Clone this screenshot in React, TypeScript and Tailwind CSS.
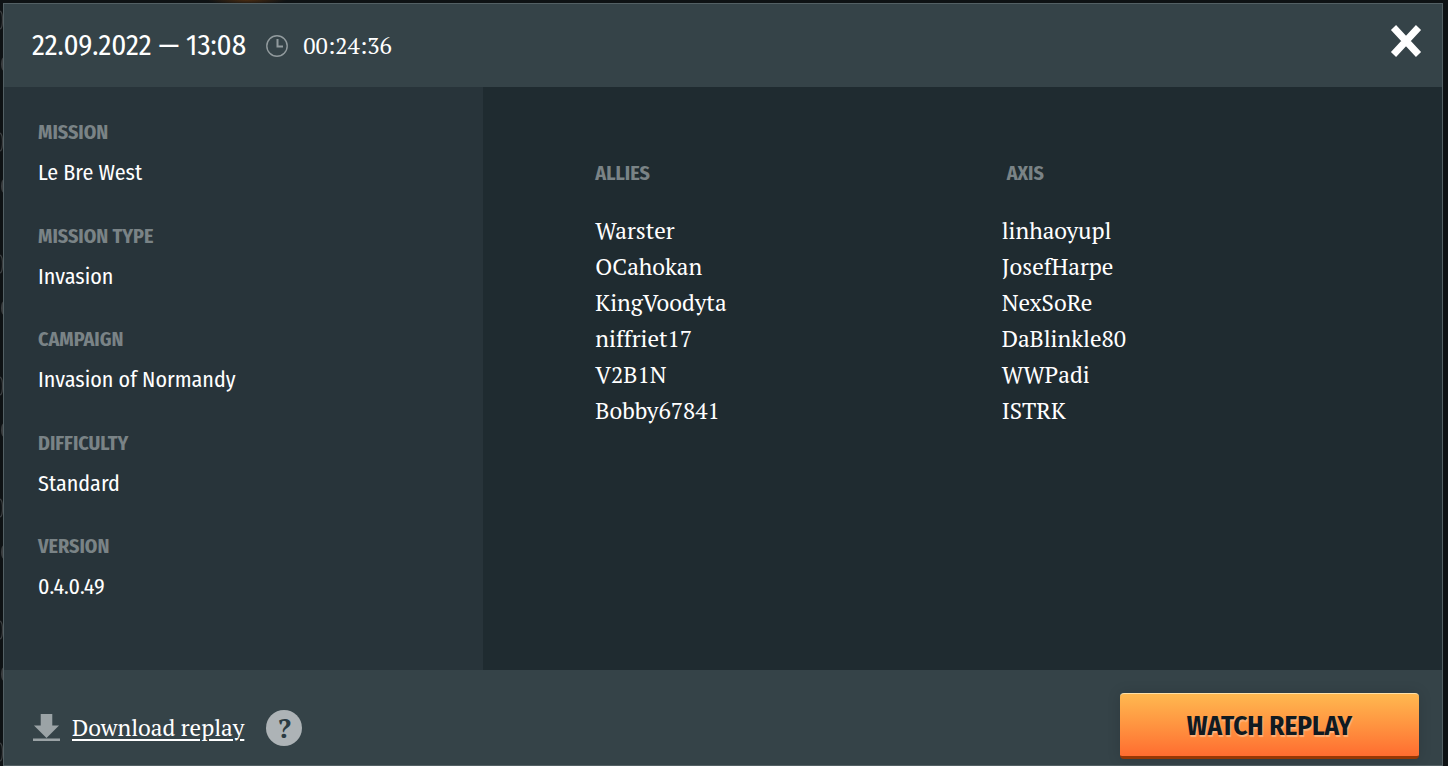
import React from "react";

const details = [
  { label: "MISSION", value: "Le Bre West" },
  { label: "MISSION TYPE", value: "Invasion" },
  { label: "CAMPAIGN", value: "Invasion of Normandy" },
  { label: "DIFFICULTY", value: "Standard" },
  { label: "VERSION", value: "0.4.0.49" },
];

const allies = ["Warster", "OCahokan", "KingVoodyta", "niffriet17", "V2B1N", "Bobby67841"];
const axis = ["linhaoyupl", "JosefHarpe", "NexSoRe", "DaBlinkle80", "WWPadi", "ISTRK"];

const sans = "font-['Fira_Sans_Condensed','Roboto',sans-serif]";
const serif = "font-['PT_Serif','Liberation_Serif',serif]";

function Team({ name, players, indent }: { name: string; players: string[]; indent?: boolean }) {
  return (
    <section>
      <h2 className={`${sans} text-[20px] leading-6 font-bold text-[#7a8386] ${indent ? "pl-[5px]" : ""}`}>{name}</h2>
      <ul className={`${serif} mt-7 text-[23px] leading-9 text-white`}>
        {players.map((p) => (
          <li key={p}>{p}</li>
        ))}
      </ul>
    </section>
  );
}

/* Edges of the page behind the dialog that stay visible on the left. */
function Backdrop() {
  return (
    <svg className="absolute top-0 left-0 h-full w-[3px]" aria-hidden="true">
      <defs>
        <pattern id="edge" width="3" height="122" patternUnits="userSpaceOnUse">
          <path d="M0 11Q2.5 12 2.5 20T0 29" fill="none" stroke="#3a3d3f" strokeWidth="1.2" />
          <ellipse cx="4" cy="64" rx="3" ry="7" fill="#3a3d3f" />
        </pattern>
      </defs>
      <rect width="100%" height="100%" fill="url(#edge)" />
    </svg>
  );
}

export default function App() {
  return (
    <div className="relative flex min-h-screen bg-[#0e1214] bg-[radial-gradient(ellipse_40px_5px_at_247px_0px,#4a2c12,transparent)] pt-[3px] pr-[5px] pl-[3px]">
      <Backdrop />
      <main className="flex flex-1 flex-col border border-[#536064] bg-[#354348]">
        <header className="flex h-[83px] items-center pr-5 pl-7 text-white">
          <h1 className={`${sans} text-[29px] leading-8`}>22.09.2022 — 13:08</h1>
          <svg className="ml-5 size-[22px]" viewBox="0 0 22 22" aria-hidden="true">
            <circle cx="11" cy="11" r="10.2" fill="none" stroke="#929b9e" strokeWidth="1.4" />
            <path d="M11.5 4V11.5H17" fill="none" stroke="#929b9e" strokeWidth="2" />
          </svg>
          <time className={`${serif} ml-[15px] text-[23px] leading-8`}>00:24:36</time>
          <button type="button" aria-label="Close" className="mb-[10px] ml-auto">
            <svg className="h-[34px] w-8" viewBox="0 0 32 34" aria-hidden="true">
              <path d="M3.5 3.5L28.5 30.5M28.5 3.5L3.5 30.5" stroke="#fff" strokeWidth="7" />
            </svg>
          </button>
        </header>

        <div className="flex flex-1">
          <dl className="flex w-1/3 flex-col justify-between bg-[#28343a] pt-[33px] pr-4 pb-[69px] pl-[34px]">
            {details.map((d) => (
              <div key={d.label}>
                <dt className={`${sans} text-[20px] leading-6 font-bold text-[#7a8386]`}>{d.label}</dt>
                <dd className={`${sans} mt-[15px] text-[22px] leading-7 text-white`}>{d.value}</dd>
              </div>
            ))}
          </dl>
          <div className="grid flex-1 grid-cols-2 content-start bg-[#1f2b30] pt-[74px] pr-[34px] pl-28">
            <Team name="ALLIES" players={allies} />
            <Team name="AXIS" players={axis} indent />
          </div>
        </div>

        <footer className="flex h-[95px] items-center pt-5 pr-[23px] pl-[29px]">
          <a href="#download" className={`${serif} flex items-center text-[23px] leading-8 text-white`}>
            <svg className="mr-3 size-[27px]" viewBox="0 0 28 28" aria-hidden="true">
              <path d="M8 0H20V12H27L14 25L1 12H8ZM0 25.5H28V28H0Z" fill="#9ba3a6" />
            </svg>
            <span className="underline decoration-2 underline-offset-3">Download replay</span>
          </a>
          <button
            type="button"
            aria-label="Help"
            className={`${serif} ml-[22px] size-9 rounded-full bg-[#adb3b6] text-[28px] leading-9 font-bold text-[#2b3b43]`}
          >
            ?
          </button>
          <button
            type="button"
            className={`${sans} mb-1 ml-auto h-[66px] w-[299px] rounded border-t border-b-3 border-t-[#ffe0a8] border-b-[#963705] bg-linear-to-b from-[#ffb850] to-[#ff6c30] pt-1 text-[27px] font-bold text-[#111a20] shadow-[0_0_14px_#0002] [text-shadow:1px_2px_1px_#ffb27a]`}
          >
            WATCH REPLAY
          </button>
        </footer>
      </main>
    </div>
  );
}
